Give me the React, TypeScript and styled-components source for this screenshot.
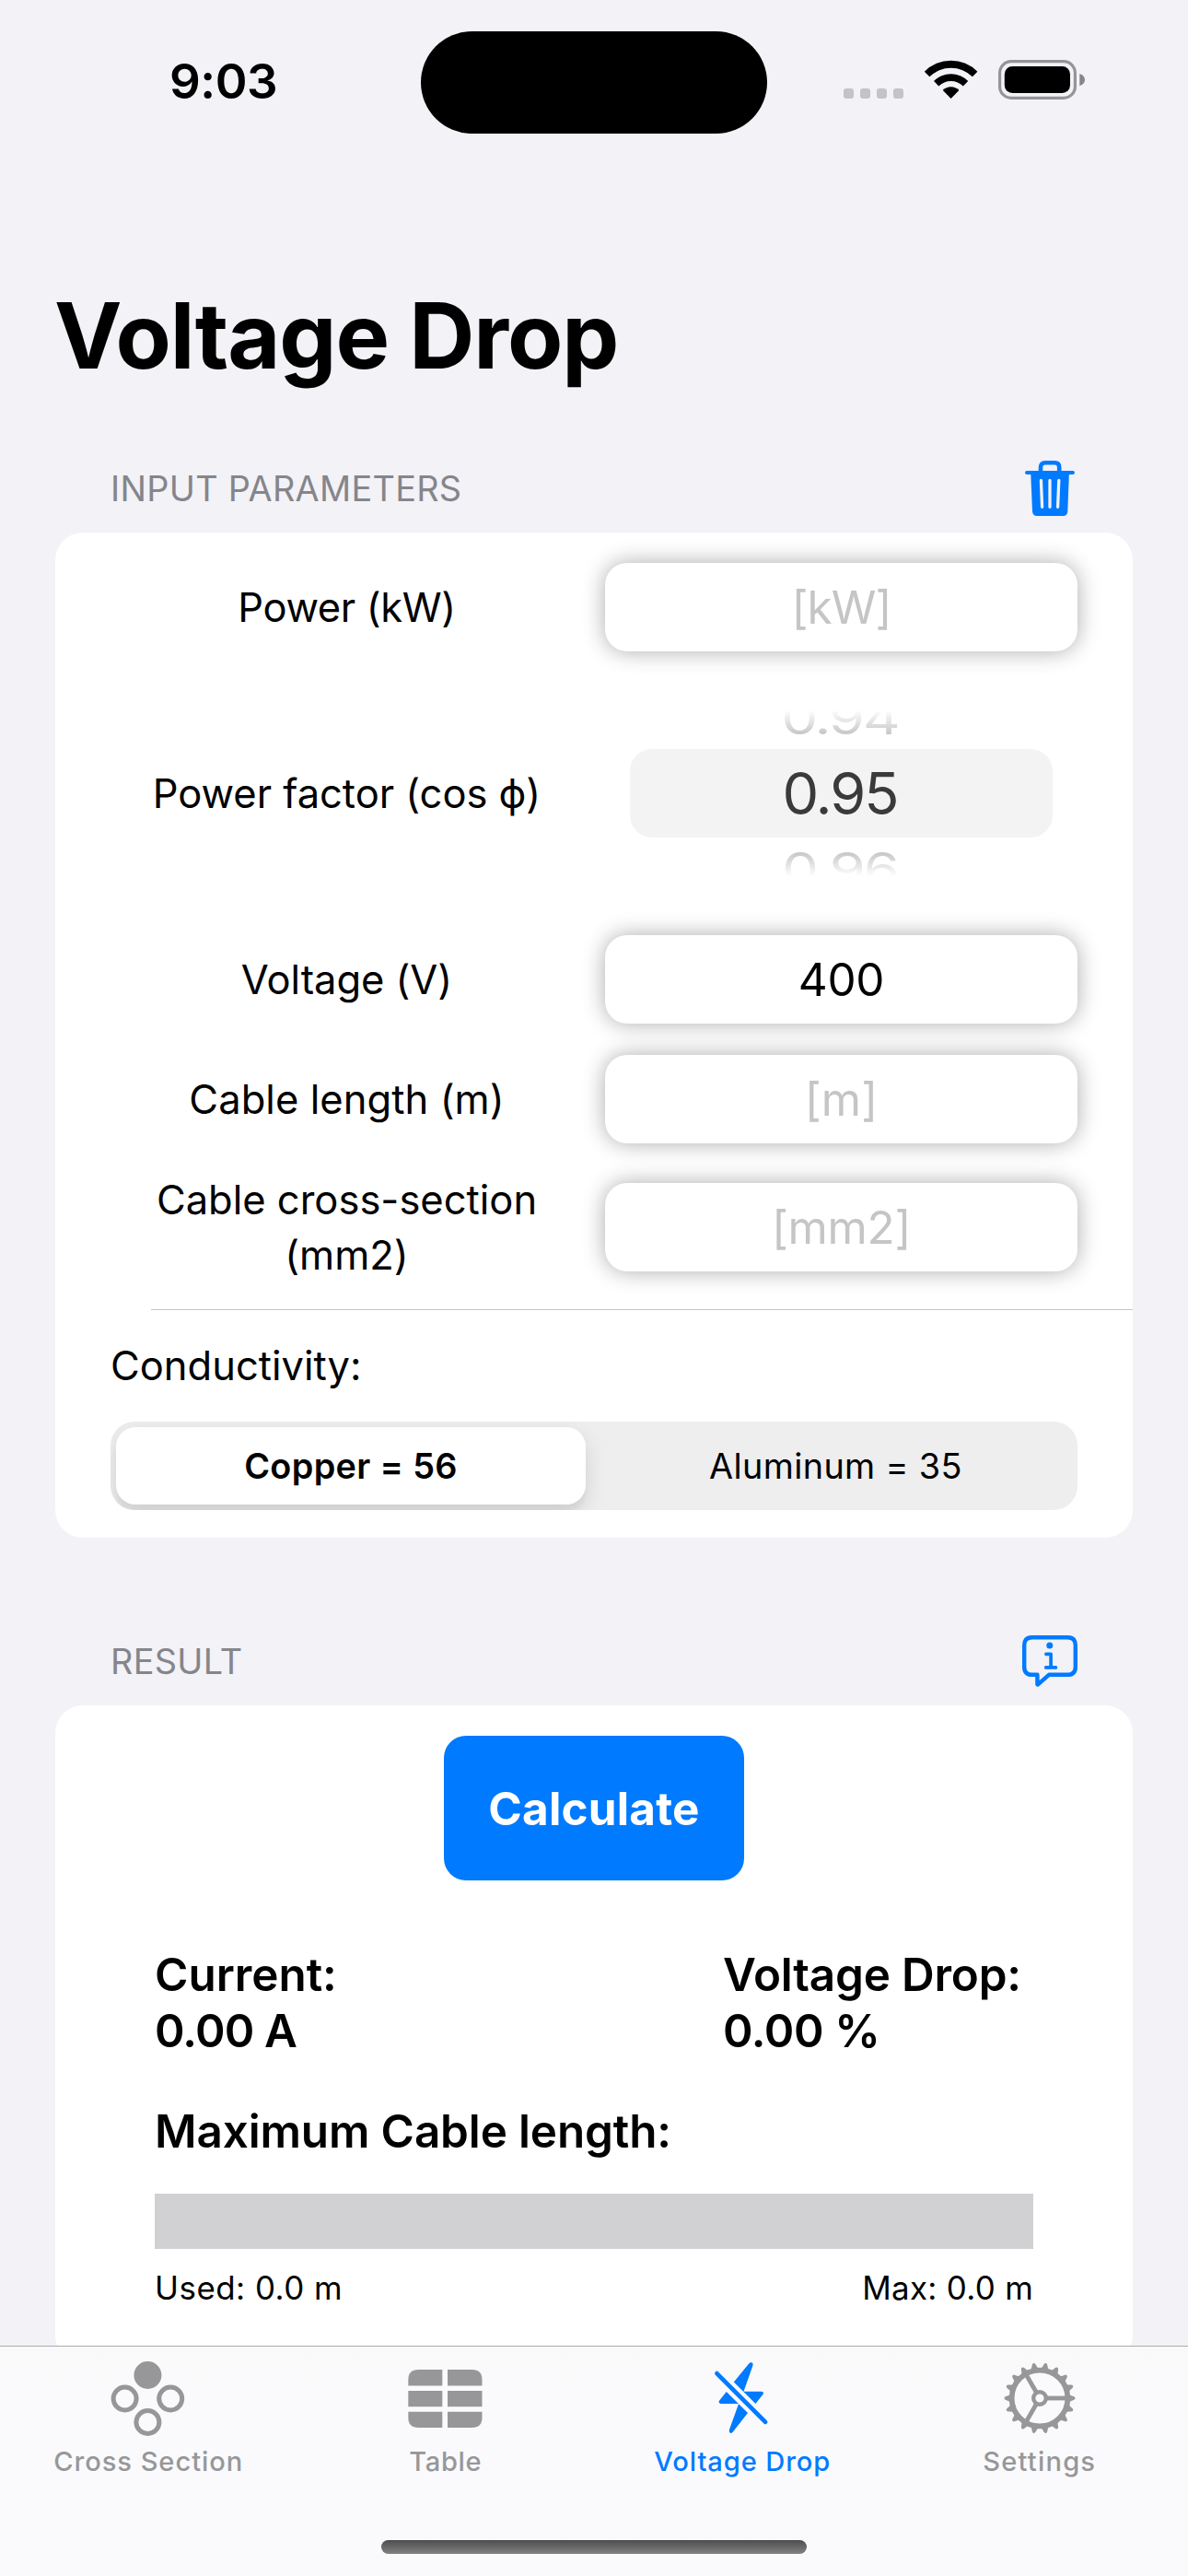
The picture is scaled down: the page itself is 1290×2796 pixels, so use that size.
import React, { useState } from "react";
import styled, { createGlobalStyle } from "styled-components";

const BLUE = "#007aff";
const GROUPED_BG = "#f2f2f7";
const TAB_GRAY = "#979799";

const GlobalStyle = createGlobalStyle`
  *, *::before, *::after { box-sizing: border-box; }
  body {
    margin: 0;
    background: ${GROUPED_BG};
    color: #000;
    font-family: Inter, "Liberation Sans", sans-serif;
    -webkit-font-smoothing: antialiased;
  }
  button, input { font-family: inherit; }
`;

const Screen = styled.div`
  display: flex;
  flex-direction: column;
  width: 1290px;
  height: 2796px;
  overflow: hidden;
  background: ${GROUPED_BG};
`;

const StatusBar = styled.header`
  display: grid;
  grid-template-columns: 456px 378px 1fr;
  align-items: center;
  height: 177px;
  flex: none;
`;

const Clock = styled.time`
  padding-left: 184px;
  margin-top: -2px;
  font-size: 52.8px;
  line-height: 64px;
  font-weight: 600;
  letter-spacing: -0.48px;
`;

const Island = styled.div`
  height: 111px;
  margin: 1px 1px 0;
  border-radius: 56px;
  background: #000;
`;

const StatusIcons = styled.div`
  display: flex;
  align-items: flex-end;
  gap: 22px;
  height: 44px;
  margin-top: -5px;
  padding-left: 82px;

  svg { display: block; }
`;

const SignalDots = styled.div`
  display: flex;
  gap: 7px;
  padding-bottom: 1px;
`;

const SignalDot = styled.span`
  width: 11px;
  height: 11px;
  border-radius: 3px;
  background: #c3c3c8;
`;

const Content = styled.main`
  flex: 1;
  min-height: 0;
  overflow: hidden;
  padding: 128px 60px 0;
`;

const Title = styled.h1`
  margin: 0 0 57px -1px;
  font-size: 98.5px;
  line-height: 120px;
  font-weight: 700;
  letter-spacing: -1.1px;
`;

const SectionHeader = styled.div`
  display: flex;
  align-items: center;
  justify-content: space-between;
  height: 96px;
  padding: 0 60px;
`;

const SectionTitle = styled.h2`
  margin: 0;
  color: #85858a;
  font-size: 37.8px;
  line-height: 46px;
  font-weight: 400;
  letter-spacing: 0.32px;
  text-transform: uppercase;
`;

const IconButton = styled.button`
  display: block;
  width: 60px;
  height: 60px;
  padding: 0;
  border: 0;
  background: none;
  color: ${BLUE};

  svg { display: block; }
`;

const Card = styled.section<{ $after?: number }>`
  margin-bottom: ${(p) => p.$after ?? 0}px;
  padding: 33px 0 30px;
  border-radius: 30px;
  background: #fff;
`;

const Row = styled.div<{ $height?: number; $before?: number }>`
  display: grid;
  grid-template-columns: 513px 513px;
  column-gap: 24px;
  align-items: center;
  height: ${(p) => p.$height ?? 96}px;
  margin-top: ${(p) => p.$before ?? 0}px;
  padding: 0 60px;
`;

const Label = styled.label<{ $tracking?: number }>`
  padding: 0 40px;
  font-size: 43.5px;
  line-height: 60px;
  letter-spacing: ${(p) => p.$tracking ?? 0}px;
  text-align: center;
`;

const Field = styled.input<{ $tracking?: number }>`
  width: 100%;
  height: 96px;
  padding: 0;
  border: 0;
  border-radius: 24px;
  outline: none;
  background: #fff;
  box-shadow: 0 0 24px rgba(0, 0, 0, 0.33);
  color: #000;
  font-size: 49.4px;
  letter-spacing: ${(p) => p.$tracking ?? 0}px;
  text-align: center;

  &::placeholder { color: #c5c5c7; opacity: 1; }
`;

const Wheel = styled.div`
  display: flex;
  flex-direction: column;
  justify-content: center;
  height: 180px;
  margin: 0 27px;
  overflow: hidden;
  mask-image: linear-gradient(transparent 0, #000 34px, #000 146px, transparent 180px);
  font-size: 63px;
  letter-spacing: -2.1px;
  text-align: center;
  text-indent: -3px;
`;

const WheelValue = styled.div`
  flex: none;
  height: 96px;
  border-radius: 24px;
  background: #f3f3f4;
  color: #3a3a3a;
  line-height: 96px;
`;

const WheelNeighbour = styled.div`
  flex: none;
  height: 68px;
  color: #b4b4b6;
  line-height: 68px;
  transform: scaleY(0.79);
`;

const Divider = styled.hr`
  height: 1px;
  margin: 29px 0 30px 104px;
  border: 0;
  background: #c6c6c8;
`;

const Conductivity = styled.div`
  padding: 0 60px;
`;

const ConductivityLabel = styled.div`
  padding-bottom: 31px;
  font-size: 43.5px;
  line-height: 60px;
`;

const Segmented = styled.div`
  display: grid;
  grid-template-columns: 1fr 1fr;
  height: 96px;
  border-radius: 26px;
  overflow: hidden;
  background: #eeeeef;
`;

const Segment = styled.button<{ $selected: boolean }>`
  margin: ${(p) => (p.$selected ? "6px 9px 6px 6px" : "6px 0")};
  padding: 0;
  border: 0;
  border-radius: 21px;
  background: ${(p) => (p.$selected ? "#fff" : "transparent")};
  box-shadow: ${(p) =>
    p.$selected ? "0 9px 24px rgba(0, 0, 0, 0.12), 0 9px 3px rgba(0, 0, 0, 0.03)" : "none"};
  color: #000;
  font-size: 37.8px;
  font-weight: ${(p) => (p.$selected ? 600 : 400)};
  letter-spacing: 0.35px;
`;

const ResultCard = styled(Card)`
  padding: 33px 108px 60px;
`;

const CalculateButton = styled.button`
  display: block;
  width: 326px;
  height: 157px;
  margin: 0 auto 72px;
  padding: 0;
  border: 0;
  border-radius: 24px;
  background: ${BLUE};
  color: #fff;
  font-size: 49.4px;
  font-weight: 700;
  letter-spacing: 0.2px;
`;

const Metrics = styled.div`
  display: grid;
  grid-template-columns: 1fr 337px;
`;

const MetricText = styled.div<{ $tracking?: number }>`
  font-size: 49.4px;
  line-height: 61px;
  font-weight: 600;
  letter-spacing: ${(p) => p.$tracking ?? 0}px;
`;

const MaximumTitle = styled(MetricText)`
  margin: 48px 0 37px;
`;

const LengthBar = styled.div`
  height: 60px;
  background: #d1d1d3;
`;

const LengthLegend = styled.div`
  display: flex;
  justify-content: space-between;
  padding-top: 21px;
  font-size: 34.9px;
  line-height: 43px;
`;

const LegendText = styled.span<{ $tracking: number }>`
  letter-spacing: ${(p) => p.$tracking}px;
`;

const TabBar = styled.nav`
  flex: none;
  height: 250px;
  border-top: 1px solid #acacad;
  background: linear-gradient(#f9f9f9, #fafafc 40px);
`;

const Tabs = styled.div`
  display: grid;
  grid-template-columns: repeat(4, 1fr);
  height: 210px;
  padding-top: 13px;
`;

const Tab = styled.button<{ $active: boolean; $tracking: number }>`
  display: flex;
  flex-direction: column;
  align-items: center;
  gap: 6px;
  padding: 0;
  border: 0;
  background: none;
  color: ${(p) => (p.$active ? BLUE : TAB_GRAY)};
  font-size: 29.1px;
  line-height: 36px;
  font-weight: 500;
  letter-spacing: ${(p) => p.$tracking}px;

  svg { display: block; }
`;

const HomeIndicator = styled.div`
  width: 462px;
  height: 15px;
  margin: 0 auto;
  border-radius: 8px;
  background: linear-gradient(#4d4d4d, #828282);
`;

const WifiIcon = () => (
  <svg width="59" height="44" viewBox="0 0 59 44" fill="#000">
    <path d="M0.8 13.7A40.5 40.5 0 0 1 58.4 13.7L52.9 19.3A33.2 33.2 0 0 0 6.3 19.3Z" />
    <path d="M11 24A26 26 0 0 1 48.2 24L42.9 29.4A19 19 0 0 0 16.3 29.4Z" />
    <path d="M20.8 34A12.4 12.4 0 0 1 38.4 34L29.6 43Z" />
  </svg>
);

const BatteryIcon = () => (
  <svg width="95" height="43" viewBox="0 0 95 43">
    <rect x="1.6" y="1.6" width="81.8" height="39.8" rx="12.5" fill="none" stroke="#959599" strokeWidth="3.2" />
    <rect x="6.8" y="6.9" width="71.2" height="29.2" rx="8.5" fill="#000" />
    <path d="M88.3 15Q94 17.2 94 21.6T88.3 28.3Z" fill="#868689" />
  </svg>
);

const TrashIcon = () => (
  <svg width="60" height="60" viewBox="0 0 60 60" fill="none" strokeLinecap="round">
    <path
      d="M20 13V7.2Q20 2.3 24.9 2.3H35.2Q40.2 2.3 40.2 7.2V13"
      stroke="currentColor"
      strokeWidth="4.6"
      strokeLinecap="butt"
    />
    <path d="M5.1 13H54.9" stroke="currentColor" strokeWidth="4.2" />
    <path d="M9.2 13H50.9L49.3 55Q49 60 44.2 60H16Q11.4 60 11 55Z" fill="currentColor" />
    <path d="M20.4 21.3L21.6 50.3M30 21.3V50.3M39.8 21.3L38.6 50.3" stroke={GROUPED_BG} strokeWidth="3.3" />
  </svg>
);

const InfoBubbleIcon = () => (
  <svg width="60" height="60" viewBox="0 0 60 60" fill="none" stroke="currentColor" strokeLinecap="round" strokeLinejoin="round">
    <path
      d="M10.8 4.2H49.2Q57.8 4.2 57.8 12.8V36.2Q57.8 44.8 49.2 44.8H29L17 55.4Q16.4 55.8 16.4 55V44.8H10.8Q2.2 44.8 2.2 36.2V12.8Q2.2 4.2 10.8 4.2Z"
      strokeWidth="4.4"
    />
    <path d="M25.9 22.3H31.1V36.9M25.7 36.9H36.4" strokeWidth="3.7" />
    <circle cx="29.8" cy="13" r="3.5" fill="currentColor" stroke="none" />
  </svg>
);

const CrossSectionIcon = () => (
  <svg width="88" height="88" viewBox="0 0 88 88" fill="none" stroke="currentColor" strokeWidth="5">
    <circle cx="43.4" cy="18" r="12.5" fill="currentColor" />
    <circle cx="18.6" cy="43.5" r="12.5" />
    <circle cx="68.2" cy="43.5" r="12.5" />
    <circle cx="43.4" cy="69" r="12.5" />
  </svg>
);

const TableIcon = () => (
  <svg width="88" height="88" viewBox="0 0 88 88" fill="currentColor">
    <path d="M3.3 29.5V23Q3.3 12 14.3 12H40.3V29.5Z" />
    <path d="M46 12H72.5Q83.5 12 83.5 23V29.5H46Z" />
    <rect x="3.3" y="35" width="37" height="17.2" />
    <rect x="46" y="35" width="37.5" height="17.2" />
    <path d="M3.3 57.7H40.3V75H14.3Q3.3 75 3.3 64Z" />
    <path d="M46 57.7H83.5V64Q83.5 75 72.5 75H46Z" />
  </svg>
);

const BoltSlashIcon = () => (
  <svg width="88" height="88" viewBox="0 0 88 88" fill="currentColor">
    <g transform="translate(0 -0.5)">
      <path d="M34.8 26.1L51.4 5.8Q53.2 3.9 54.9 5.1Q56.2 6.3 55.3 8.6L45.5 36.2H65Q68.2 36.8 66.4 39.6L58.4 49.6Z" />
      <path d="M26.8 36.4L50 59.4L33.9 80.1Q32.4 82.2 30.5 81Q29.2 80 30 77.6L40.1 49.6H20.8Q17.4 48.8 19.2 46.1Z" />
      <path d="M16.4 16.6L69.1 69.4" stroke="currentColor" strokeWidth="4.7" strokeLinecap="round" />
    </g>
  </svg>
);

const TEETH = Array.from({ length: 18 }, (_, i) => i * 20);
const SPOKES = [0, 120, 240];

const GearIcon = () => (
  <svg width="88" height="88" viewBox="0 0 88 88" fill="none" stroke="currentColor">
    <g transform="translate(44 43)">
      <circle r="30.4" strokeWidth="5.8" />
      {TEETH.map((angle) => (
        <path
          key={angle}
          d="M31.5 -4.6Q33.4 -3 36.7 -2Q38.5 -1.4 38.5 0T36.7 2Q33.4 3 31.5 4.6Z"
          transform={`rotate(${angle})`}
          fill="currentColor"
          stroke="none"
        />
      ))}
      {SPOKES.map((angle) => (
        <path key={angle} d="M7 0H29" transform={`rotate(${angle})`} strokeWidth="4.8" />
      ))}
      <circle r="6.8" strokeWidth="4.4" fill="#fafafb" />
    </g>
  </svg>
);

const TABS = [
  { name: "Cross Section", tracking: 0.94, Icon: CrossSectionIcon },
  { name: "Table", tracking: 0.6, Icon: TableIcon },
  { name: "Voltage Drop", tracking: 0.9, Icon: BoltSlashIcon },
  { name: "Settings", tracking: 1.2, Icon: GearIcon },
];

const MATERIALS = ["Copper = 56", "Aluminum = 35"];

export default function App() {
  const [material, setMaterial] = useState(MATERIALS[0]);
  const [tab, setTab] = useState("Voltage Drop");

  return (
    <>
      <GlobalStyle />
      <Screen>
        <StatusBar>
          <Clock>9:03</Clock>
          <Island />
          <StatusIcons>
            <SignalDots>
              <SignalDot />
              <SignalDot />
              <SignalDot />
              <SignalDot />
            </SignalDots>
            <WifiIcon />
            <BatteryIcon />
          </StatusIcons>
        </StatusBar>

        <Content>
          <Title>Voltage Drop</Title>

          <SectionHeader>
            <SectionTitle>Input parameters</SectionTitle>
            <IconButton aria-label="Clear">
              <TrashIcon />
            </IconButton>
          </SectionHeader>
          <Card $after={86}>
            <Row>
              <Label $tracking={-0.36}>Power (kW)</Label>
              <Field placeholder="[kW]" $tracking={-0.93} />
            </Row>
            <Row $height={308}>
              <Label $tracking={-0.03}>Power factor (cos ϕ)</Label>
              <Wheel>
                <WheelNeighbour>0.94</WheelNeighbour>
                <WheelValue>0.95</WheelValue>
                <WheelNeighbour>0.96</WheelNeighbour>
              </Wheel>
            </Row>
            <Row>
              <Label $tracking={-0.06}>Voltage (V)</Label>
              <Field defaultValue="400" $tracking={-0.28} />
            </Row>
            <Row $before={34}>
              <Label $tracking={0.07}>Cable length (m)</Label>
              <Field placeholder="[m]" $tracking={0.1} />
            </Row>
            <Row $before={31} $height={120}>
              <Label $tracking={0}>Cable cross-section (mm2)</Label>
              <Field placeholder="[mm2]" $tracking={-0.29} />
            </Row>
            <Divider />
            <Conductivity>
              <ConductivityLabel>Conductivity:</ConductivityLabel>
              <Segmented>
                {MATERIALS.map((name) => (
                  <Segment key={name} $selected={name === material} onClick={() => setMaterial(name)}>
                    {name}
                  </Segment>
                ))}
              </Segmented>
            </Conductivity>
          </Card>

          <SectionHeader>
            <SectionTitle>Result</SectionTitle>
            <IconButton aria-label="Info">
              <InfoBubbleIcon />
            </IconButton>
          </SectionHeader>
          <ResultCard>
            <CalculateButton>Calculate</CalculateButton>
            <Metrics>
              <div>
                <MetricText $tracking={0}>Current:</MetricText>
                <MetricText $tracking={-0.84}>0.00 A</MetricText>
              </div>
              <div>
                <MetricText $tracking={-0.18}>Voltage Drop:</MetricText>
                <MetricText $tracking={-0.4}>0.00 %</MetricText>
              </div>
            </Metrics>
            <MaximumTitle $tracking={-0.12}>Maximum Cable length:</MaximumTitle>
            <LengthBar />
            <LengthLegend>
              <LegendText $tracking={0.5}>Used: 0.0 m</LegendText>
              <LegendText $tracking={0.3}>Max: 0.0 m</LegendText>
            </LengthLegend>
          </ResultCard>
        </Content>

        <TabBar>
          <Tabs>
            {TABS.map(({ name, tracking, Icon }) => (
              <Tab key={name} $active={name === tab} $tracking={tracking} onClick={() => setTab(name)}>
                <Icon />
                {name}
              </Tab>
            ))}
          </Tabs>
          <HomeIndicator />
        </TabBar>
      </Screen>
    </>
  );
}
